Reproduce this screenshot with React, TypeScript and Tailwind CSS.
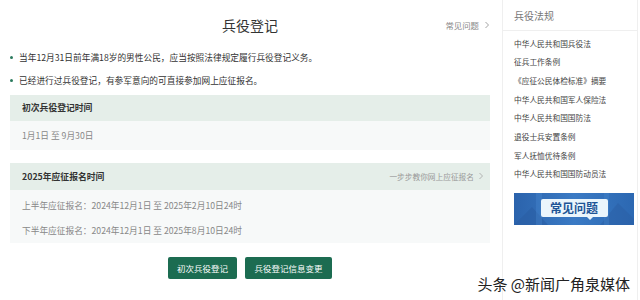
import React from "react";

const font = { fontFamily: '"Noto Sans CJK SC", "Noto Sans", sans-serif' };

function Chevron({ className = "" }: { className?: string }) {
  return (
    <svg width="6" height="8" viewBox="0 0 6 8" className={className} fill="none">
      <path d="M1.5 1 L4.5 4 L1.5 7" stroke="currentColor" strokeWidth="0.9" />
    </svg>
  );
}

export default function App() {
  const links = [
    "中华人民共和国兵役法",
    "征兵工作条例",
    "《应征公民体检标准》摘要",
    "中华人民共和国军人保险法",
    "中华人民共和国国防法",
    "退役士兵安置条例",
    "军人抚恤优待条例",
    "中华人民共和国国防动员法",
  ];
  return (
    <div className="relative w-[640px] h-[300px] overflow-hidden bg-white flex" style={font}>
      {/* Main column */}
      <div className="w-[502px] pl-[10px] pr-[12px] flex flex-col">
        <div className="grid grid-cols-[1fr_auto_1fr] h-[46px] pt-[4px] items-center">
          <div />
          <div className="text-[14px] text-[#333] leading-none">兵役登记</div>
          <div className="flex justify-end items-center gap-[5px] text-[8.4px] text-[#888]">
            <span>常见问题</span>
            <Chevron className="text-[#999]" />
          </div>
        </div>
        <div className="flex flex-col text-[8.7px] text-[#333]">
          <div className="h-[23px] flex items-center gap-[6px]">
            <span className="w-[3px] h-[3px] rounded-full bg-[#2b7a5e]" />
            <span>当年12月31日前年满18岁的男性公民，应当按照法律规定履行兵役登记义务。</span>
          </div>
          <div className="h-[23px] flex items-center gap-[6px]">
            <span className="w-[3px] h-[3px] rounded-full bg-[#2b7a5e]" />
            <span>已经进行过兵役登记，有参军意向的可直接参加网上应征报名。</span>
          </div>
        </div>
        <div className="mt-[3px] flex flex-col">
          <div className="h-[26px] bg-[#e5eee9] flex items-center px-[12px] text-[8.8px] font-bold text-[#333]">
            初次兵役登记时间
          </div>
          <div className="h-[29px] bg-[#f7f9f9] flex items-center px-[12px] text-[8.7px] text-[#888]">
            1月1日 至 9月30日
          </div>
        </div>
        <div className="mt-[13px] flex flex-col">
          <div className="h-[27px] bg-[#e5eee9] flex items-center justify-between pl-[12px] pr-[6px]">
            <span className="text-[8.8px] font-bold text-[#333]">2025年应征报名时间</span>
            <span className="flex items-center gap-[4px] text-[7.7px] text-[#999]">
              一步步教你网上应征报名
              <Chevron className="text-[#aaa]" />
            </span>
          </div>
          <div className="h-[53px] bg-[#f7f9f9] pt-[3px] px-[12px] flex flex-col text-[8.7px] text-[#888]">
            <div className="h-[25px] flex items-center">上半年应征报名：2024年12月1日 至 2025年2月10日24时</div>
            <div className="h-[25px] flex items-center">下半年应征报名：2024年12月1日 至 2025年8月10日24时</div>
          </div>
        </div>
        <div className="mt-[14px] flex justify-center gap-[8px]">
          <button className="h-[22px] w-[69px] rounded-[2px] bg-[#1c6c51] text-white text-[8.5px] flex items-center justify-center">
            初次兵役登记
          </button>
          <button className="h-[22px] w-[87px] rounded-[2px] bg-[#1c6c51] text-white text-[8.5px] flex items-center justify-center">
            兵役登记信息变更
          </button>
        </div>
      </div>

      {/* Sidebar */}
      <div className="w-[136px] border-l border-r border-[#efefef] flex flex-col">
        <div className="h-[31px] border-b border-[#efefef] pl-[11px] flex items-center text-[10px] text-[#777]">
          兵役法规
        </div>
        <div className="pt-[3px] pl-[11px] flex flex-col">
          {links.map((l) => (
            <div key={l} className="h-[18.7px] flex items-center text-[7.7px] text-[#444]">
              {l}
            </div>
          ))}
        </div>
        <div className="mt-[9px] ml-[11px] w-[120px] h-[32px] relative overflow-hidden bg-gradient-to-r from-[#2b63ac] via-[#3a7ac4] to-[#2c68b2] flex items-center justify-center">
          <svg className="absolute inset-0" width="120" height="32" viewBox="0 0 120 32">
            <polygon points="0,32 18,14 34,32" fill="#2a5ea4" opacity="0.6" />
            <polygon points="86,32 104,10 120,26 120,32" fill="#2a5ea4" opacity="0.5" />
            <rect x="22" y="0" width="6" height="32" fill="#4a8ad0" opacity="0.35" />
            <rect x="90" y="0" width="5" height="32" fill="#4a8ad0" opacity="0.3" />
          </svg>
          <div className="relative -mt-[2px] w-[67px] h-[18px] rounded-[2px] bg-[#eaf5fc] flex items-center justify-center text-[12px] font-bold text-[#1d5496] leading-none">
            常见问题
            <span className="absolute left-[46px] -bottom-[3px] w-0 h-0 border-l-[3px] border-r-[3px] border-t-[3px] border-l-transparent border-r-transparent border-t-[#eaf5fc]" />
          </div>
        </div>
      </div>

      {/* Watermark */}
      <div
        className="absolute right-[10px] bottom-[9px] text-[15px] text-[#222] leading-none"
        style={{ textShadow: "0 0 2px #fff, 0 0 2px #fff" }}
      >
        头条 @新闻广角泉媒体
      </div>
    </div>
  );
}
